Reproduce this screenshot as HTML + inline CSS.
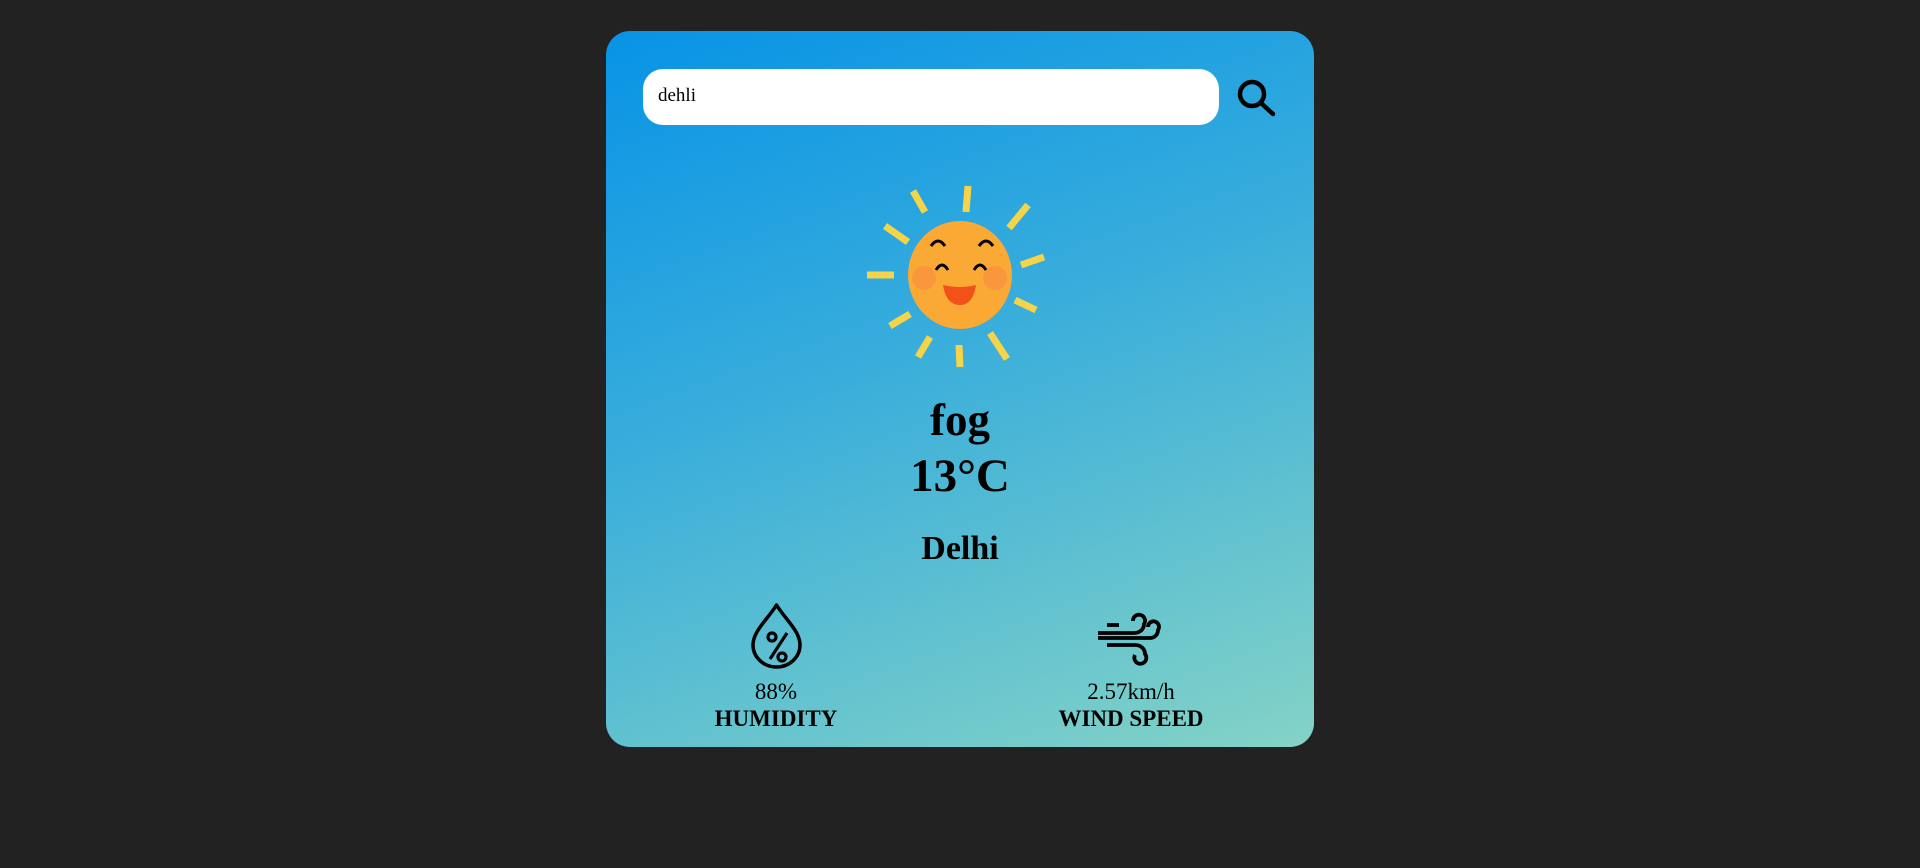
<!DOCTYPE html>
<html><head><meta charset="utf-8"><style>
html,body{margin:0;padding:0;background:#222;width:1920px;height:868px;overflow:hidden;font-family:"Liberation Serif",serif;}
.card{position:absolute;left:606px;top:31px;width:708px;height:716px;border-radius:24px;background:linear-gradient(160deg,#0793e6 0%,#3aaedb 45%,#84d3c6 100%);}
.inp{position:absolute;left:37px;top:38px;width:576px;height:56px;background:#fff;border-radius:20px;}
.inp span{position:absolute;left:15px;top:16px;font-size:19px;color:#000;}
.t{position:absolute;left:0;width:100%;text-align:center;font-weight:bold;color:#000;}
.c{position:absolute;text-align:center;color:#000;width:300px;}
svg{position:absolute;}
</style></head><body>
<div class="card">
 <div class="inp"><span>dehli</span></div>
 <div class="t" style="top:363px;font-size:45px;line-height:52px">fog</div>
 <div class="t" style="top:418px;font-size:47px;line-height:54px">13°C</div>
 <div class="t" style="top:496px;font-size:34px;line-height:44px">Delhi</div>
 <div class="c" style="left:20px;top:647px;font-size:23px;line-height:27px">88%<br><b>HUMIDITY</b></div>
 <div class="c" style="left:375px;top:647px;font-size:23px;line-height:27px">2.57km/h<br><b>WIND SPEED</b></div>
</div>
<svg style="left:1230px;top:70px" width="60" height="55" viewBox="0 0 60 55"><circle cx="22" cy="24" r="12" fill="none" stroke="#000" stroke-width="4.5"/><line x1="31" y1="33" x2="43" y2="44" stroke="#000" stroke-width="4.5" stroke-linecap="round"/></svg>
<svg style="left:840px;top:160px" width="240" height="230" viewBox="-120 -115 240 230">
 <g stroke="#f5d44a" stroke-width="7">
  <line x1="8" y1="-89" x2="6" y2="-63"/><line x1="-47" y1="-84" x2="-35" y2="-63"/><line x1="68" y1="-70" x2="49" y2="-47"/>
  <line x1="-75" y1="-49" x2="-52" y2="-33"/><line x1="84" y1="-18" x2="61" y2="-10"/><line x1="-93" y1="0" x2="-66" y2="0"/>
  <line x1="55" y1="25" x2="76" y2="35"/><line x1="-70" y1="51" x2="-50" y2="39"/><line x1="-42" y1="82" x2="-30" y2="62"/>
  <line x1="-1" y1="70" x2="0" y2="92"/><line x1="30" y1="58" x2="47" y2="84"/>
 </g>
 <ellipse cx="0" cy="0" rx="52" ry="54" fill="#fba935"/>
 <circle cx="-36" cy="3" r="12" fill="#f88a45" opacity=".6"/><circle cx="35" cy="3" r="12" fill="#f88a45" opacity=".6"/>
 <g fill="none" stroke="#000" stroke-width="3"><path d="M-29 -29q7-10 14 0"/><path d="M19 -29q7-10 14 0"/><path d="M-24 -5q6-10 12 0"/><path d="M14 -5q6-10 12 0"/></g>
 <path d="M-17 10q17 4 33 0q-3 20-16 20q-14 0-17-20z" fill="#f2521a"/>
</svg>
<svg style="left:740px;top:595px" width="70" height="80" viewBox="0 0 70 80"><path d="M36.5 10C28 24 13 36 13 50A23.5 22 0 0 0 60 50C60 36 45 24 36.5 10Z" fill="none" stroke="#000" stroke-width="3.5" stroke-linejoin="round"/><circle cx="32" cy="42" r="4" fill="none" stroke="#000" stroke-width="3.2"/><circle cx="42" cy="62" r="4" fill="none" stroke="#000" stroke-width="3.2"/><line x1="47" y1="38" x2="30" y2="64" stroke="#000" stroke-width="3.2"/></svg>
<svg style="left:1090px;top:600px" width="80" height="70" viewBox="0 0 80 70"><g fill="none" stroke="#000" stroke-width="3.8"><path d="M17 25H29"/><path d="M8 33H44C50 33 54 29 54 24A6 6 0 1 0 43 21"/><path d="M8 38H60C64 38 68 35 68 30A5.5 5.5 0 1 0 58 27"/><path d="M17 45H45C51 45 55 49 55 54A6 6 0 1 1 45 55"/></g></svg>
</body></html>
